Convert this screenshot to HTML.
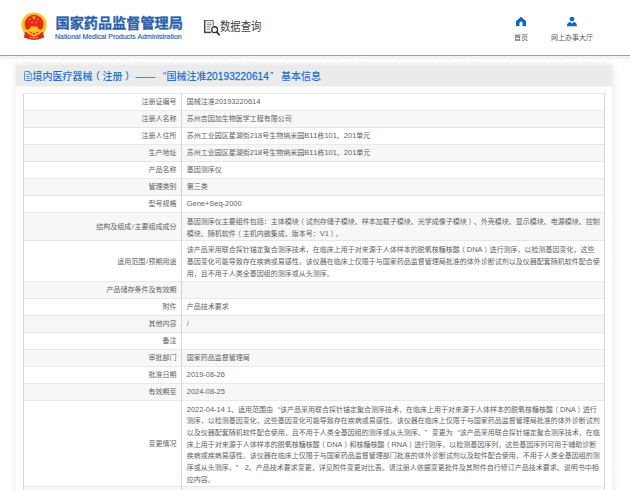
<!DOCTYPE html>
<html lang="zh-CN">
<head>
<meta charset="utf-8">
<title>国家药品监督管理局 数据查询</title>
<style>
*{margin:0;padding:0;box-sizing:border-box}
html,body{width:630px;height:490px;overflow:hidden;background:#fff}
body{font-family:"Liberation Sans","Noto Sans CJK SC",sans-serif;color:#626262;text-spacing-trim:space-all;font-kerning:none}
#page{position:absolute;left:0;top:0;width:1260px;height:980px;transform:scale(.5);transform-origin:0 0;background:#fff;overflow:hidden}
.pl{position:relative;left:-.24em}.pr{position:relative;left:.24em}
h1 .q1{margin-left:10px}h1 .q2{margin-left:2px;margin-right:9.6px}h1 .dg{letter-spacing:.26px;-webkit-text-stroke:.55px #1f6fd0}
.lt{font-size:14.9px;letter-spacing:0}
.ql{margin-left:.667em}.qr{margin-right:.667em}
/* header */
#hd{position:absolute;left:0;top:0;width:1260px;height:110px;background:#fff}
#hd .rule{position:absolute;left:0;top:110px;width:1260px;height:2px;background:#74a6df}
#emblem{position:absolute;left:40px;top:21px;width:56px;height:60px}
#t1{position:absolute;left:111px;top:24px;-webkit-text-stroke:.6px #2b5fad;font-size:28.3px;line-height:42px;font-weight:bold;color:#2b5fad;white-space:nowrap;letter-spacing:0}
#t2{position:absolute;left:110px;top:63px;-webkit-text-stroke:.35px #2b5fad;font-size:13.9px;line-height:18px;color:#2b5fad;white-space:nowrap}
#qicon{position:absolute;left:406px;top:38px;width:36px;height:36px}
#qtxt{position:absolute;left:440px;top:39px;font-size:20.7px;line-height:30px;color:#444;white-space:nowrap;transform:scaleY(1.2);transform-origin:0 50%}
.nav{position:absolute;top:0;text-align:center;font-size:14px;color:#555;white-space:nowrap}
.nav svg{position:absolute;left:50%;}
.nav span{position:absolute;left:50%;top:64px;transform:translateX(-50%);line-height:22px}
/* card */
#card{position:absolute;left:31px;top:130px;width:1194px;height:900px;background:#fff;box-shadow:0 0 14px rgba(0,0,0,.13)}
#card h1{height:43px;background:#ebebeb;font-size:20px;line-height:44px;overflow:hidden;font-weight:500;color:#1f6fd0;padding-left:34px;white-space:nowrap}
#card h1{position:relative}#card h1 svg{position:absolute;left:16.6px;top:11.8px}
table{position:absolute;left:16px;top:57px;width:1163px;border-collapse:collapse;table-layout:fixed;font-size:14px;line-height:23px}
td{border:1px solid #d2d2d2;border-left-color:#b0b0b8;border-right-color:#b0b0b8;padding:4px 10px 6px 10px;vertical-align:middle;white-space:nowrap;overflow:hidden}
td.k{width:316px;text-align:right}
td.v{text-align:left;padding-left:9.5px}
tr:nth-child(even) td{background:#f7f7f7}
tr.m td.v{line-height:23.35px}
tr.m td.k{padding-top:5px;padding-bottom:5px}
.sl{margin:0 1.2px}
tr.m2 td.v{padding-top:5.2px;padding-bottom:3.1px}
tr.m3 td.v{padding-top:6px;padding-bottom:4.45px}
tr.m7 td.v{padding-top:5.1px;padding-bottom:1.95px}
#dots{position:absolute;left:0;top:56px;width:630px;height:3px;background-image:repeating-linear-gradient(135deg,#ebebeb 0,#ebebeb 1px,#f9f9f9 1px,#f9f9f9 2.4px)}
</style>
</head>
<body>
<div id="page">
 <div id="hd">
  <svg id="emblem" viewBox="0 0 56 60">
   <circle cx="28" cy="29" r="25.2" fill="#f9c822"/>
   <circle cx="28" cy="29" r="23.4" fill="none" stroke="#f3a712" stroke-width="1" opacity=".5"/>
   <circle cx="28.2" cy="27.2" r="18.8" fill="#e9291f"/>
   <path d="M10 42.5 Q28 54 46 42.5 L48.2 54 Q28 63.5 7.8 54 Z" fill="#e2261c"/>
   <path d="M11 38.6 H45 V41 Q28 45.5 11 41 Z" fill="#f9c822"/>
   <path d="M16.5 38.8 L18.5 36.2 H37.5 L39.5 38.8 Z" fill="#f9c822"/>
   <path d="M21 36.4 V33.6 H35 V36.4 Z" fill="#fbd64a"/>
   <path d="M20 33.8 L21.5 32 H34.5 L36 33.8 Z" fill="#f9c822"/>
   <circle cx="28" cy="46.8" r="5" fill="#f9c822"/>
   <circle cx="28" cy="46.8" r="2.1" fill="#e9291f"/>
   <path d="M15 45 Q21 50 28 50.5 Q35 50 41 45" fill="none" stroke="#f9c822" stroke-width="1.8"/>
   <path d="M19 53.4 Q28 56.4 37 53.4" fill="none" stroke="#f9c822" stroke-width="2.4" stroke-dasharray="4.2 2"/>
   <polygon points="28,9.6 29.1,12.7 32.4,12.7 29.8,14.7 30.7,17.9 28,16 25.3,17.9 26.2,14.7 23.6,12.7 26.9,12.7" fill="#f9c822"/>
   <circle cx="19.6" cy="17.6" r="1.5" fill="#f9c822"/><circle cx="36.2" cy="17.6" r="1.5" fill="#f9c822"/>
   <circle cx="24" cy="24.2" r="1.5" fill="#f9c822"/><circle cx="32" cy="24.2" r="1.5" fill="#f9c822"/>
  </svg>
  <div id="t1">国家药品监督管理局</div>
  <div id="t2">National Medical Products Administration</div>
  <svg id="qicon" viewBox="0 0 36 36" fill="none" stroke="#3f3f4e">
   <path d="M3.4 2.4 V27" stroke-width="2.8"/>
   <path d="M2 26.8 H16" stroke-width="3"/>
   <path d="M2 3.2 H20.4 V14" stroke-width="1.6"/>
   <path d="M7.4 7.6 H17 M7.4 11 H17 M7.4 14.4 H16 M7.4 17.8 H14.4 M7.4 21.2 H14" stroke-width="1.2" stroke="#55555f"/>
   <circle cx="23.2" cy="21.4" r="5.9" stroke-width="2.6" stroke="#2e2e3c"/>
   <path d="M27.6 26.2 L32.4 31.6" stroke-width="3.4" stroke-linecap="round" stroke="#2e2e3c"/>
  </svg>
  <div id="qtxt">数据查询</div>
  <div class="nav" style="left:1012px;width:60px">
   <svg width="22" height="20" viewBox="0 0 22 20" style="top:33px;margin-left:-11px"><path d="M11 0.5 L21 9.5 V19.5 H14 V13 a3 3 0 0 0 -6 0 V19.5 H1 V9.5 Z" fill="#1063cb"/></svg>
   <span>首页</span>
  </div>
  <div class="nav" style="left:1094px;width:100px">
   <svg width="22" height="20" viewBox="0 0 22 20" style="top:33px;margin-left:-11px"><circle cx="11" cy="5.2" r="4.8" fill="#1063cb"/><path d="M1 20 C1 13 5 11 8 11 L11 14.5 L14 11 C17 11 21 13 21 20 Z" fill="#1063cb"/></svg>
   <span>网上办事大厅</span>
  </div>
  <div class="rule"></div>
 </div>

 <div id="card">
  <h1><svg width="17" height="20" viewBox="0 0 17 20" fill="none" stroke="#2f7bd6" stroke-width="1.7"><path d="M1.2 2.4 a1.4 1.4 0 0 1 1.4 -1.4 H10.4 L15.6 6.2 V17.6 a1.4 1.4 0 0 1 -1.4 1.4 H2.6 a1.4 1.4 0 0 1 -1.4 -1.4 Z"/><path d="M10.2 1.2 V6.4 H15.4" stroke-width="1.5"/><path d="M4.6 7.2 H8.4 M4.6 11 H12.4 M4.6 14.8 H12.4" stroke-width="1.5"/></svg>境内医疗器械<span class="pl">（</span>注册<span class="pr">）</span> —— <span class="q1">“</span>国械注准<span class="dg">20193220614</span><span class="q2">”</span> 基本信息</h1>
  <table>
   <tr><td class="k">注册证编号</td><td class="v">国械注准<span class="lt">20193220614</span></td></tr>
   <tr><td class="k">注册人名称</td><td class="v">苏州吉因加生物医学工程有限公司</td></tr>
   <tr><td class="k">注册人住所</td><td class="v">苏州工业园区星湖街<span class="lt">218</span>号生物纳米园<span class="lt">B11</span>栋<span class="lt">101</span>、<span class="lt">201</span>单元</td></tr>
   <tr><td class="k">生产地址</td><td class="v">苏州工业园区星湖街<span class="lt">218</span>号生物纳米园<span class="lt">B11</span>栋<span class="lt">101</span>、<span class="lt">201</span>单元</td></tr>
   <tr><td class="k">产品名称</td><td class="v">基因测序仪</td></tr>
   <tr><td class="k">管理类别</td><td class="v">第三类</td></tr>
   <tr><td class="k">型号规格</td><td class="v"><span class="lt">Gene+Seq-2000</span></td></tr>
   <tr class="m m2"><td class="k">结构及组成<span class="sl">/</span>主要组成成分</td><td class="v">基因测序仪主要组件包括：主体模块<span class="pl">（</span>试剂存储子模块、样本加载子模块、光学成像子模块<span class="pr">）</span>、外壳模块、显示模块、电源模块、控制<br>模块、随机软件<span class="pl">（</span>主机内嵌集成，版本号：<span class="lt">V1</span><span class="pr">）</span>。</td></tr>
   <tr class="m m3"><td class="k">适用范围<span class="sl">/</span>预期用途</td><td class="v">该产品采用联合探针锚定聚合测序技术，在临床上用于对来源于人体样本的脱氧核糖核酸<span class="pl">（</span><span class="lt">DNA</span><span class="pr">）</span>进行测序，以检测基因变化，这些<br>基因变化可能导致存在疾病或易感性。该仪器在临床上仅限于与国家药品监督管理局批准的体外诊断试剂以及仪器配套随机软件配合使<br>用，且不用于人类全基因组的测序或从头测序。</td></tr>
   <tr><td class="k">产品储存条件及有效期</td><td class="v"></td></tr>
   <tr><td class="k">附件</td><td class="v">产品技术要求</td></tr>
   <tr><td class="k">其他内容</td><td class="v">/</td></tr>
   <tr><td class="k">备注</td><td class="v"></td></tr>
   <tr><td class="k">审批部门</td><td class="v">国家药品监督管理局</td></tr>
   <tr><td class="k">批准日期</td><td class="v"><span class="lt">2019-08-26</span></td></tr>
   <tr><td class="k">有效期至</td><td class="v"><span class="lt">2024-08-25</span></td></tr>
   <tr class="m m7"><td class="k">变更情况</td><td class="v"><span class="lt">2022-04-14 1</span>、适用范围由<span class="ql">“</span>该产品采用联合探针锚定聚合测序技术，在临床上用于对来源于人体样本的脱氧核糖核酸<span class="pl">（</span><span class="lt">DNA</span><span class="pr">）</span>进行<br>测序，以检测基因变化，这些基因变化可能导致存在疾病或易感性。该仪器在临床上仅限于与国家药品监督管理局批准的体外诊断试剂<br>以及仪器配套随机软件配合使用，且不用于人类全基因组的测序或从头测序。<span class="qr">”</span>变更为<span class="ql">“</span>该产品采用联合探针锚定聚合测序技术，在临<br>床上用于对来源于人体样本的脱氧核糖核酸<span class="pl">（</span><span class="lt">DNA</span><span class="pr">）</span>和核糖核酸<span class="pl">（</span><span class="lt">RNA</span><span class="pr">）</span>进行测序，以检测基因序列，这些基因序列可用于辅助诊断<br>疾病或疾病易感性。该仪器在临床上仅限于与国家药品监督管理部门批准的体外诊断试剂以及软件配合使用，不用于人类全基因组的测<br>序或从头测序。<span class="qr">”</span> <span class="lt">2</span>、产品技术要求变更，详见附件变更对比表。请注册人依据变更批件及其附件自行修订产品技术要求、说明书中相<br>应内容。</td></tr>
   <tr><td class="k">&nbsp;</td><td class="v"></td></tr>
  </table>
 </div>
</div>
<div id="dots"></div>
</body>
</html>
